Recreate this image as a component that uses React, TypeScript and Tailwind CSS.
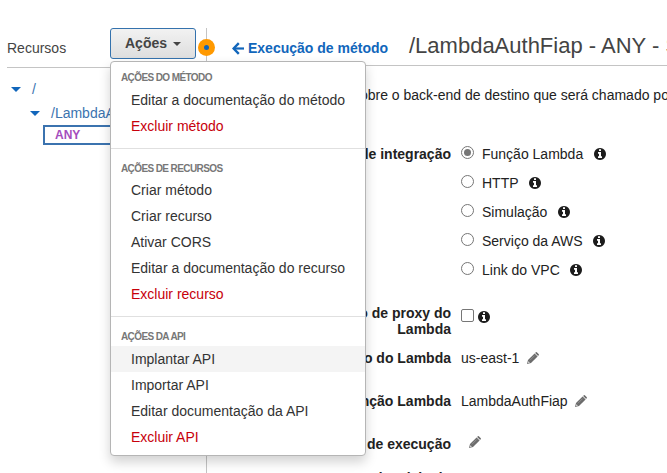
type MenuGroup = { title: string; items: string[]; titleClass: string };

const groups: MenuGroup[] = [
  { title: "AÇÕES DO MÉTODO", titleClass: "h-5", items: ["Editar a documentação do método", "Excluir método"] },
  {
    title: "AÇÕES DE RECURSOS",
    titleClass: "h-[19px] pt-px",
    items: ["Criar método", "Criar recurso", "Ativar CORS", "Editar a documentação do recurso", "Excluir recurso"],
  },
  {
    title: "AÇÕES DA API",
    titleClass: "h-5",
    items: ["Implantar API", "Importar API", "Editar documentação da API", "Excluir API"],
  },
];

const integrations = ["Função Lambda", "HTTP", "Simulação", "Serviço da AWS", "Link do VPC"];

function Caret({ className = "" }: { className?: string }) {
  return <span className={`inline-block h-0 w-0 border-x-transparent ${className}`} />;
}

function ArrowLeft({ className = "" }: { className?: string }) {
  return (
    <svg viewBox="0 0 12 13" fill="none" stroke="currentColor" className={className}>
      <path d="M1.6 6.5H12" strokeWidth="2.2" />
      <path d="M6.8 1.2 1.6 6.5 6.8 11.8" strokeWidth="2.4" />
    </svg>
  );
}

function Info({ className = "" }: { className?: string }) {
  return (
    <svg viewBox="0 128 1536 1536" fill="currentColor" className={`size-3 shrink-0 text-[#1c1c1c] ${className}`}>
      <path d="M1024 1376v-160q0-14-9-23t-23-9h-96v-512q0-14-9-23t-23-9h-320q-14 0-23 9t-9 23v160q0 14 9 23t23 9h96v320h-96q-14 0-23 9t-9 23v160q0 14 9 23t23 9h448q14 0 23-9t9-23zm-128-896v-160q0-14-9-23t-23-9h-192q-14 0-23 9t-9 23v160q0 14 9 23t23 9h192q14 0 23-9t9-23zm640 416q0 209-103 385.5t-279.5 279.5-385.5 103-385.5-103-279.5-279.5-103-385.5 103-385.5 279.5-279.5 385.5-103 385.5 103 279.5 279.5 103 385.5z" />
    </svg>
  );
}

function Pencil({ className = "" }: { className?: string }) {
  return (
    <svg viewBox="0 0 12 12" className={`size-3 shrink-0 ${className}`}>
      <path d="M0 12 1 8 7.6 1.4 10.6 4.4 4 11Z" fill="#6c6c6c" />
      <path d="M8.1 .9 8.9 .2Q9.4-.1 9.8.2L11.8 2.2Q12.1 2.6 11.8 3L11.1 3.9Z" fill="#6c6c6c" />
      <path d="M2.9 8.3 7.6 3.6" stroke="#a8a8a8" strokeWidth=".6" />
      <path d="M1.4 9.2 2.8 10.6 1.2 11Z" fill="#fff" />
    </svg>
  );
}

function ActionsMenu() {
  return (
    <div className="absolute top-[33px] left-0 z-10 h-[395px] w-[256px] rounded-[4px] border border-[#b5b5b5] bg-white pt-[5px] shadow-[0_6px_12px_rgba(0,0,0,0.18)]">
      {groups.map((g, i) => (
        <div key={g.title} className={i > 0 ? "mt-[9px] border-t border-[#e0e0e0] pt-[9px]" : ""}>
          <div className={`flex items-center pl-[10px] text-[10px] font-bold tracking-[-0.6px] text-[#777] ${g.titleClass}`}>
            {g.title}
          </div>
          {g.items.map((item) => (
            <div
              key={item}
              className={`flex h-[26px] items-center pl-5 text-[14px] ${item.startsWith("Excluir") ? "text-[#c7000b]" : "text-[#333]"} ${item === "Implantar API" ? "bg-[#f4f4f4]" : ""}`}
            >
              {item}
            </div>
          ))}
        </div>
      ))}
    </div>
  );
}

function Sidebar() {
  return (
    <aside className="flex w-[207px] shrink-0 flex-col border-r border-[#c4c4c4]">
      <div className="ml-[7px] flex h-10 border-b border-[#c4c4c4]">
        <div className="w-[103px] pt-[10px] text-[14px] leading-5 text-[#444]">Recursos</div>
        <div className="relative">
          <button className="flex h-[31px] w-[86px] items-center justify-center rounded-[3px] border border-[#3472ad] bg-linear-to-b from-[#f2f2f2] to-[#dedede] text-[14px] font-bold text-[#444]">
            Ações
            <Caret className="ml-[6px] border-x-4 border-t-4 border-t-[#444]" />
          </button>
          <ActionsMenu />
        </div>
      </div>
      <div className="text-[14px] text-[#3b73af]">
        <div className="mt-[9px] flex h-6 items-center pl-[11px]">
          <Caret className="mr-[11px] border-x-[5px] border-t-[5px] border-t-[#1166bb]" />/
        </div>
        <div className="flex h-6 items-center pl-[30px]">
          <Caret className="mr-[11px] border-x-[5px] border-t-[5px] border-t-[#1166bb]" />
          /LambdaAuthFiap
        </div>
        <div className="ml-[43px] flex h-5 items-center border-2 border-r-0 border-[#3b73af] pl-[10px] text-[12px] font-bold text-[#a44dbd]">
          ANY
        </div>
      </div>
    </aside>
  );
}

export default function App() {
  return (
    <div className="relative flex h-[473px] w-[667px] overflow-hidden bg-white pt-[28px] font-['Liberation_Sans',Arial,sans-serif]">
      <Sidebar />
      <span className="absolute top-[39px] left-[198px] flex size-[17px] items-center justify-center rounded-full bg-[#ff9900]">
        <span className="size-[5px] rounded-full bg-[#1166bb]" />
      </span>
      <main className="min-w-0 flex-1 pl-[25px] text-[14px] text-[#222]">
        <header className="flex h-[38px] border-b border-[#c4c4c4] whitespace-nowrap">
          <div className="flex h-5 w-[177px] shrink-0 items-center pt-5 font-bold text-[#1166bb]">
            <ArrowLeft className="mr-1 h-[13px] w-3 shrink-0" />
            Execução de método
          </div>
          <h1 className="pt-1 text-[22px] leading-[28px] text-[#444]">/LambdaAuthFiap - ANY - Solicitação</h1>
        </header>
        <p className="mt-[19px] w-[520px] pl-10 leading-5 whitespace-nowrap">
          Informações sobre o back-end de destino que será chamado por
        </p>
        <div className="mt-[39px] flex">
          <div className="w-[219px] text-right leading-5 font-bold">Tipo de integração</div>
          <div className="pl-[10px]">
            {integrations.map((label, i) => (
              <div key={label} className="flex h-[29px] items-start leading-5">
                <span className="mt-[2px] mr-2 flex size-[13px] items-center justify-center rounded-full border border-[#767676]">
                  {i === 0 && <span className="size-[7px] rounded-full bg-[#767676]" />}
                </span>
                {label}
                <Info className="mt-[4px] ml-[10.5px]" />
              </div>
            ))}
          </div>
        </div>
        <div className="mt-[16px] flex h-[43px]">
          <div className="w-[219px] text-right leading-4 font-bold">
            Usar integração de proxy do
            <br />
            Lambda
          </div>
          <span className="mt-[4px] ml-[10px] size-[13px] rounded-[2px] border border-[#767676]" />
          <Info className="mt-[6px] ml-1" />
        </div>
        <div className="flex h-[43px] leading-5">
          <div className="w-[219px] text-right font-bold">Região do Lambda</div>
          <span className="ml-[10px]">us-east-1</span>
          <Pencil className="mt-[4px] ml-[8px]" />
        </div>
        <div className="flex h-[43px] leading-5">
          <div className="w-[219px] text-right font-bold">Função Lambda</div>
          <span className="ml-[10px]">LambdaAuthFiap</span>
          <Pencil className="mt-[4px] ml-[7px]" />
        </div>
        <div className="flex h-[34px] leading-5">
          <div className="w-[219px] text-right font-bold">Função de execução</div>
          <Pencil className="mt-[2px] ml-[18px]" />
        </div>
        <div className="w-[219px] text-right leading-5 font-bold whitespace-nowrap">Invocar com credenciais do</div>
      </main>
    </div>
  );
}
